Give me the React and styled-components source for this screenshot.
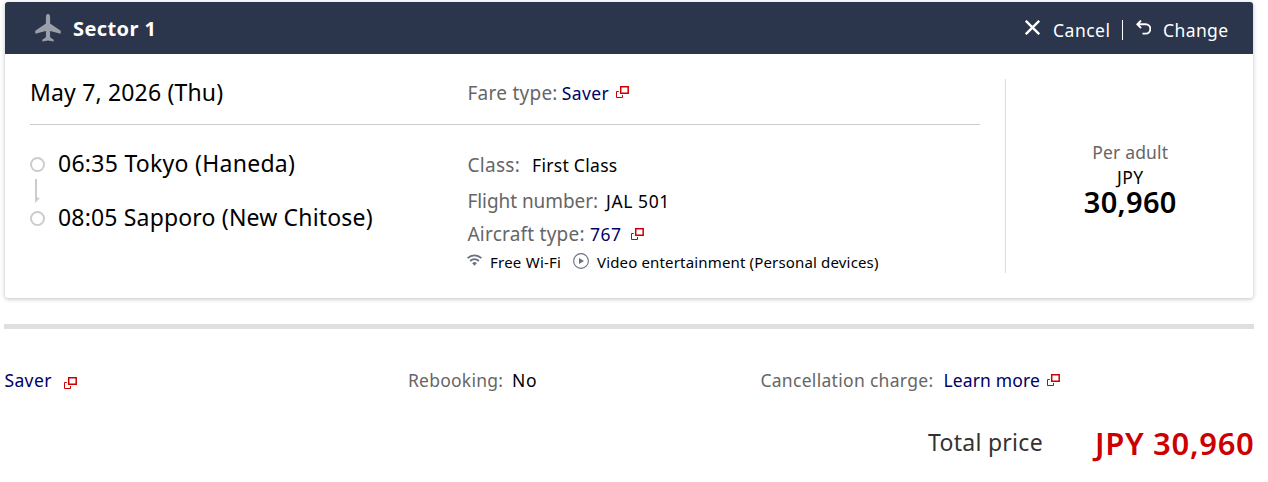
import React from 'react';
import styled, { createGlobalStyle } from 'styled-components';

const Global = createGlobalStyle`
  * { box-sizing: border-box; }
  body { margin: 0; background: #fff; color: #000; font-family: "Noto Sans", "Open Sans", sans-serif; }
`;

const Page = styled.main`
  width: 1250px;
  margin-left: 4px;
  padding-top: 2px;
`;

const Text = styled.span`
  flex: none;
  font-size: ${(p) => p.$size || 17.5}px;
  letter-spacing: ${(p) => p.$track || 0}px;
  font-weight: ${(p) => p.$weight || 400};
  color: ${(p) => p.$color || 'inherit'};
  width: ${(p) => (p.$width ? `${p.$width}px` : 'auto')};
  white-space: nowrap;
`;

const Label = styled(Text)`
  color: #666;
`;

const Link = styled(Text).attrs({ as: 'a', href: '#' })`
  color: #000066;
  text-decoration: none;
`;

const Card = styled.section`
  margin: 0 1px;
  height: 296px;
  background: #fff;
  border-radius: 3px;
  box-shadow: 0 1px 4px rgba(43, 53, 76, 0.32);
`;

const CardHeader = styled.header`
  display: flex;
  justify-content: space-between;
  height: 52px;
  padding: 13px 25px 0 30px;
  border-radius: 3px 3px 0 0;
  background: #2b354c;
  color: #fff;
`;

const Title = styled.h2`
  display: flex;
  gap: 12px;
  margin: 0;
  line-height: 27px;
  font-weight: 600;
`;

const PlaneIcon = styled.svg`
  margin-top: -1px;
`;

const Actions = styled.div`
  display: flex;
  padding-top: 3px;
`;

const Action = styled.button`
  display: flex;
  gap: ${(p) => p.$gap}px;
  height: 23px;
  padding: 0;
  border: 0;
  background: none;
  color: #fff;
  font-family: inherit;
  line-height: 24px;
  text-align: left;
`;

const ActionIcon = styled.svg`
  flex: none;
  margin-top: 2px;
`;

const Divider = styled.span`
  width: 1px;
  height: 20px;
  margin: 2px 13px 0 11px;
  background: #fff;
`;

const CardBody = styled.div`
  display: flex;
  padding: 25px 0 25px 25px;
`;

const Itinerary = styled.div`
  flex: none;
  width: 950px;
  height: 194px;
`;

const Columns = styled.div`
  display: grid;
  grid-template-columns: 437.5px 1fr;
`;

const DateRow = styled(Columns)`
  height: 46px;
  border-bottom: 1px solid #ccc;
`;

const DateText = styled(Text)`
  line-height: 27px;
`;

const Route = styled.div`
  display: flex;
  flex-direction: column;
  padding-top: 23px;
`;

const Stop = styled.div`
  display: flex;
  gap: 13px;
  height: 30px;
  line-height: 30px;
`;

const Dot = styled.span`
  width: 15px;
  height: 15px;
  margin-top: 9px;
  border: 2px solid #ccc;
  border-radius: 50%;
`;

const RouteArrow = styled.svg`
  margin-left: 5px;
  overflow: visible;
`;

const Details = styled.div`
  display: flex;
  flex-direction: column;
  padding-top: 24px;
`;

const Detail = styled.div`
  display: flex;
  align-items: baseline;
  height: ${(p) => p.$height || 32}px;
  line-height: ${(p) => p.$height || 32}px;
  margin-bottom: ${(p) => p.$after || 0}px;
`;

const Services = styled.div`
  display: flex;
  line-height: 22px;
`;

const ServiceIcon = styled.svg`
  flex: none;
  margin: ${(p) => p.$margin};
`;

const PopupSvg = styled.svg`
  flex: none;
  align-self: flex-start;
  margin: ${(p) => p.$margin};
`;

const PricePanel = styled.div`
  display: flex;
  flex: 1;
  flex-direction: column;
  align-items: center;
  height: 194px;
  margin-left: 25px;
  padding: 61px 0 0 1.5px;
  border-left: 1px solid #ddd;
  line-height: 25px;
`;

const Amount = styled(Text)`
  line-height: 23px;
`;

const Rule = styled.hr`
  height: 5px;
  margin: 26px 0 39px;
  border: 0;
  background: #dfdfdf;
`;

const Conditions = styled.div`
  display: grid;
  grid-template-columns: 403.5px 352.5px 1fr;
  padding-left: 0.4px;
`;

const Total = styled.div`
  display: flex;
  margin: 29px 0 0 924px;
  line-height: 42px;
`;

const TotalLabel = styled(Text)`
  line-height: 40px;
  height: 40px;
`;

const Popup = ({ margin }) => (
  <PopupSvg width="13" height="12" viewBox="0 0 13 12" fill="none" stroke="#c00" $margin={margin}>
    <path d="M4.700.75h7.500v6.500H4.700z" strokeWidth="1.500" />
    <path d="M2.800 5.500H.5v6h6V9" strokeWidth="1" />
  </PopupSvg>
);

export default function App() {
  return (
    <Page>
      <Global />
      <Card>
        <CardHeader>
          <Title>
            <PlaneIcon width="26" height="28" viewBox="0 0 26 28" fill="#9a9fa9">
              <path d="M13 0c-1.300 0-2.100 1.300-2.100 3v6.600L.3 16.800v3L10.900 17v6.200l-3.600 2.600V27.600l5.700-1 5.700 1V25.800l-3.600-2.600V17l10.600 2.800v-3L15.100 9.600V3c0-1.700-.8-3-2.100-3z" />
            </PlaneIcon>
            <Text $size={20} $track={0.4} $weight={700}>Sector 1</Text>
          </Title>
          <Actions>
            <Action $gap={13}>
              <ActionIcon width="15" height="15" viewBox="0 0 15 15" fill="none" stroke="#fff" strokeWidth="2.4">
                <path d="M.8.8l13.400 13.400M14.200.8L.8 14.200" />
              </ActionIcon>
              <Text $track={0.5} $width={58}>Cancel</Text>
            </Action>
            <Divider />
            <Action $gap={12}>
              <ActionIcon width="15" height="15" viewBox="0 0 15 15" fill="none" stroke="#fff" strokeWidth="1.9">
                <path d="M5 .6L1.300 4.300 5 8M1.500 4.300h8.200a4.650 4.650 0 010 9.300H6.500" />
              </ActionIcon>
              <Text $track={0.4} $width={65}>Change</Text>
            </Action>
          </Actions>
        </CardHeader>
        <CardBody>
          <Itinerary>
            <DateRow>
              <DateText $size={23} $track={0.17}>May 7, 2026 (Thu)</DateText>
              <Detail $height={28}>
                <Label $size={19} $track={0.25} $width={94.200}>Fare type:</Label>
                <Link $track={0.4} $width={54.300}>Saver</Link>
                <Popup margin="7px 0 0" />
              </Detail>
            </DateRow>
            <Columns>
              <Route>
                <Stop>
                  <Dot />
                  <Text $size={23} $track={0.27}>06:35 Tokyo (Haneda)</Text>
                </Stop>
                <RouteArrow width="5" height="24" viewBox="0 0 5 24" fill="#ccc">
                  <path d="M0 1h2v18.500L5 20 0 25z" />
                </RouteArrow>
                <Stop>
                  <Dot />
                  <Text $size={23} $track={0.17}>08:05 Sapporo (New Chitose)</Text>
                </Stop>
              </Route>
              <Details>
                <Detail $after={4}>
                  <Label $size={19} $track={0.3} $width={64.500}>Class:</Label>
                  <Text $track={0.3}>First Class</Text>
                </Detail>
                <Detail $after={2}>
                  <Label $size={19} $track={-0.07} $width={138.500}>Flight number:</Label>
                  <Text $track={0.6}>JAL 501</Text>
                </Detail>
                <Detail $height={30} $after={2}>
                  <Label $size={19} $track={0.22} $width={122.500}>Aircraft type:</Label>
                  <Link $track={0.5} $width={41}>767</Link>
                  <Popup margin="9px 0 0" />
                </Detail>
                <Services>
                  <ServiceIcon width="15" height="12" viewBox="0 0 15 12" fill="none" stroke="#6b7080" $margin="3px 8px 0 -0.5px">
                    <path d="M.6 4.200a9.800 9.800 0 0113.800 0" strokeWidth="1.900" />
                    <path d="M3.200 7a6 6 0 018.600 0" strokeWidth="1.800" />
                    <path d="M5.200 9.200a3.200 3.200 0 014.600 0L7.500 11.800z" fill="#6b7080" stroke="none" />
                  </ServiceIcon>
                  <Text $size={15} $track={0.24} $width={83}>Free Wi-Fi</Text>
                  <ServiceIcon width="16" height="16" viewBox="0 0 16 16" fill="none" stroke="#6b7080" $margin="2px 8px 0 0">
                    <circle cx="8" cy="8" r="7.400" strokeWidth="1.100" />
                    <path d="M6 5l5 3-5 3z" fill="#6b7080" stroke="none" />
                  </ServiceIcon>
                  <Text $size={15} $track={0.16}>Video entertainment (Personal devices)</Text>
                </Services>
              </Details>
            </Columns>
          </Itinerary>
          <PricePanel>
            <Label $track={0.15}>Per adult</Label>
            <Text $track={0.4}>JPY</Text>
            <Amount $size={29} $track={0.3} $weight={600}>30,960</Amount>
          </PricePanel>
        </CardBody>
      </Card>
      <Rule />
      <Conditions>
        <Detail $height={25}>
          <Link $track={0.4} $width={60}>Saver</Link>
          <Popup margin="9px 0 0 -0.4px" />
        </Detail>
        <Detail $height={25}>
          <Label $track={0.25} $width={104}>Rebooking:</Label>
          <Text $track={0.9}>No</Text>
        </Detail>
        <Detail $height={25}>
          <Label $track={0.3} $width={183}>Cancellation charge:</Label>
          <Link $track={0.15} $width={104}>Learn more</Link>
          <Popup margin="6px 0 0 -0.4px" />
        </Detail>
      </Conditions>
      <Total>
        <TotalLabel $size={23} $track={0.28} $width={167} $color="#333">Total price</TotalLabel>
        <Text $size={31} $track={0.68} $weight={600} $color="#c00">JPY 30,960</Text>
      </Total>
    </Page>
  );
}
